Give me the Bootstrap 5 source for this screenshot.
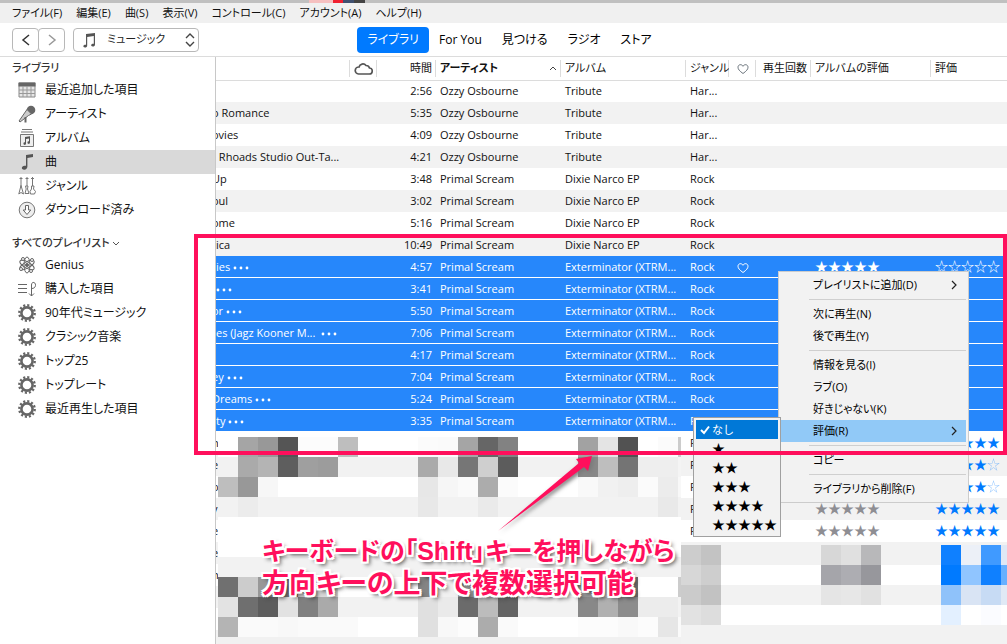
<!DOCTYPE html>
<html lang="ja">
<head>
<meta charset="utf-8">
<meta name="viewport" content="width=device-width, initial-scale=1">
<title>iTunes</title>
<link href="https://cdn.jsdelivr.net/npm/bootstrap@5.3.0/dist/css/bootstrap.min.css" rel="stylesheet">
<style>
:root{--ui:"Open Sans","Noto Sans CJK JP",sans-serif;--pink:#ff0f5c;--sel:#2687fb;--line:#dcdcdc}
body{font:11px/16px var(--ui);font-feature-settings:"palt";color:#111;height:100vh;background:#fff}
button,select{font-feature-settings:inherit!important}
a{color:inherit;text-decoration:none}
.strip{height:3px;background:linear-gradient(90deg,#c0c0c0 309px,#f5c0c0 309px 333px,#f02030 333px 343px,#405070 343px 354px,#444 354px 365px,#c0c0c0 365px)}
.menubar{height:20px;background:#f0f0f0;gap:14px;padding-left:12px}
.toolbar{height:34px;border-bottom:1px solid var(--line);padding-left:12px}
.half{flex:1 1 0}
.navbtn{width:27px;height:24px;border:1px solid #b8b8b8;background:#fff;border-radius:4px;padding:0;color:#333}
.navbtn+.navbtn{margin-left:-1px;color:#999}
.source{width:126px;height:24px}
.source select{appearance:none;width:100%;height:24px;border:1px solid #b8b8b8;border-radius:4px;background:#fff;padding:0 0 2px 33px;font-size:11px;color:#222}
.source svg{position:absolute;pointer-events:none}
.tab{height:26px;padding:0 10px;font-size:12px;line-height:24px;border:0;border-radius:4px;background:none}
.tab.on{background:#007aff;color:#fff}
.sidebar{width:216px;border-right:1px solid #c8c8c8}
.sidebar h2{font-size:11px;line-height:21px;margin:0;padding-left:12px;color:#333;font-weight:500}
.sidebar h2.second{padding-top:10px}
.entry{height:24px;padding-left:18px;gap:9px;font-size:12px}
.entry.on{background:#d9d9d9}
.entry svg{width:18px;height:18px;flex:none}
.tracks{table-layout:fixed;border-collapse:collapse;width:100%}
.tracks th{height:23px;padding:0 4px;font-weight:400;font-size:11px;border-bottom:1px solid var(--line);background:linear-gradient(#dcdcdc,#dcdcdc) right 3px/1px 17px no-repeat;white-space:nowrap;overflow:hidden}
.tracks th:last-child{background:none}
.tracks td{height:22px;padding:0 4px;white-space:nowrap;overflow:hidden}
.tracks td:first-child{padding-left:0}
.tracks tbody tr:nth-child(even){background:#f2f2f2}
.tracks tbody tr.picked{background:linear-gradient(var(--sel) 21px,#fff 21px);color:#fff}
.cut{margin-left:-4px}
.stars{font:13px/16px "Noto Sans CJK JP",sans-serif}
.tracks .stars{color:#007aff;padding-bottom:2px}.tracks .stars.auto{color:#8e8e93}.tracks .picked .stars{color:#fff}
.faint{opacity:.4}
.mosaic,.frame,.pointer,.note,.popup{position:absolute}
.mosaic{left:0;top:0}
.frame{left:194px;right:0;top:177px;height:221px;border:4px solid var(--pink);pointer-events:none}
.popup{background:#f2f2f2;border:1px solid #ccc;margin:0;color:#000}
.ctx{left:778px;top:214px;width:191px;padding:2px}
.ctx button,.rate button{display:flex;align-items:center;width:100%;border:0;background:none;padding:0;text-align:left}
.ctx button{height:22px;padding:0 8px 0 32px;font-size:11px}
.ctx button.on{background:#91c9f7}
.ctx hr{margin:3px 0 3px 28px;border:0;border-top:1px solid #cfcfcf;opacity:1}
.rate{left:693px;top:360px;width:88px;padding:2px;border-color:#a0a0a0}
.rate button{height:19px;padding:0 0 2px 16px;color:#000;font-feature-settings:normal!important}
.rate button.on{background:#0078d7;color:#fff;padding:0 0 0 4px;gap:2px}
.note{left:262px;top:478px;font:700 27px/33px "Liberation Sans","Noto Sans CJK JP",sans-serif;font-feature-settings:"palt";color:var(--pink);white-space:nowrap;margin:0;
text-shadow:2px 0 #fff,-2px 0 #fff,0 2px #fff,0 -2px #fff,2px 2px #fff,-2px -2px #fff,2px -2px #fff,-2px 2px #fff,3px 3px 4px #333}
.note .lead-line{font-size:25px}
.pointer{left:490px;top:390px;filter:drop-shadow(2px 2px 2px #777)}
</style>
</head>
<body class="d-flex flex-column overflow-hidden">
<svg class="d-none">
<symbol id="gear" viewBox="0 0 18 18"><circle cx="9" cy="9" r="5.6" fill="none" stroke="#666" stroke-width="2.6"/><circle cx="9" cy="9" r="7.7" fill="none" stroke="#666" stroke-width="2.4" stroke-dasharray="2.1 1.93"/></symbol>
<symbol id="heart" viewBox="0 0 12 12"><path d="M6 10.5C2.5 8 1 6.300 1 4.200C1 1.300 4.800.8 6 3.300C7.200.8 11 1.300 11 4.200C11 6.300 9.500 8 6 10.500Z" fill="none" stroke="currentColor"/></symbol>
<symbol id="note" viewBox="0 0 18 18"><path d="M8 2l7-1v3l-5.600 1v8.500c0 2-1.400 3-3 3.200c-3.600.2-3.200-3.700.2-3.900h1.400z" fill="#555"/></symbol>
<symbol id="more" viewBox="0 0 17 4"><circle cx="2" cy="2" r="1.400"/><circle cx="8" cy="2" r="1.400"/><circle cx="14" cy="2" r="1.400"/></symbol>
</svg>
<div class="strip flex-shrink-0"></div>
<nav class="menubar d-flex align-items-center flex-shrink-0">
<a href="#">ファイル(F)</a><a href="#">編集(E)</a><a href="#">曲(S)</a><a href="#">表示(V)</a><a href="#">コントロール(C)</a><a href="#">アカウント(A)</a><a href="#">ヘルプ(H)</a>
</nav>
<header class="toolbar d-flex align-items-center flex-shrink-0">
<div class="half d-flex align-items-center">
<button class="navbtn" aria-label="戻る"><svg width="10" height="14" viewBox="0 0 10 14" class="d-block mx-auto"><path d="M8 2L2 7l6 5" fill="none" stroke="currentColor" stroke-width="1.500"/></svg></button><button class="navbtn" aria-label="進む"><svg width="10" height="14" viewBox="0 0 10 14" class="d-block mx-auto"><path d="M2 2l6 5-6 5" fill="none" stroke="currentColor" stroke-width="1.500"/></svg></button>
<div class="source position-relative ms-2 d-flex align-items-center">
<select aria-label="メディア"><option>ミュージック</option></select>
<svg width="16" height="16" viewBox="0 0 16 16" class="start-0 ms-2"><path d="M5 2l9-1v11.500c0 1.500-1 2-2.200 2c-2.400 0-2-2.700.3-2.700h.7V4L6.200 5v8.500c0 1.500-1 2-2.200 2c-2.400 0-2-2.700.3-2.700H5z" fill="#555"/></svg>
<svg width="10" height="16" viewBox="0 0 10 16" class="end-0 me-1"><path d="M1 6l4-4 4 4M1 10l4 4 4-4" fill="none" stroke="#444" stroke-width="1.400"/></svg>
</div>
</div>
<div class="d-flex flex-shrink-0"><button class="tab on">ライブラリ</button><button class="tab">For You</button><button class="tab">見つける</button><button class="tab">ラジオ</button><button class="tab">ストア</button></div>
<div class="half"></div>
</header>
<main class="d-flex flex-fill position-relative overflow-hidden">
<aside class="sidebar flex-shrink-0">
<h2>ライブラリ</h2>
<a href="#" class="entry d-flex align-items-center"><svg viewBox="0 0 18 18"><path d="M1 2h16v14H1z" fill="#e6e6e6" stroke="#888"/><path d="M.5 1.500h17v4H.5z" fill="#666"/><path d="M5 5v11M9 5v11M13 5v11M1 9h16M1 12.500h16" stroke="#999"/></svg>最近追加した項目</a>
<a href="#" class="entry d-flex align-items-center"><svg viewBox="0 0 18 18"><circle cx="13" cy="5" r="4.300" fill="#666"/><path d="M9 4.500l4.500 4.500-3 1.500L2 17l-1-1z" fill="#ccc" stroke="#666"/><path d="M7.500 12v5.500" stroke="#666" stroke-width="2"/></svg>アーティスト</a>
<a href="#" class="entry d-flex align-items-center"><svg viewBox="0 0 18 18"><path d="M4 .5h10M3 3h12" stroke="#777"/><path d="M2.500 5.500h13v12h-13z" fill="#eee" stroke="#777"/><path d="M7 8l5-.7v6a1.300 1.300 0 1 1-1-1V9.500l-3 .4v4.400a1.300 1.300 0 1 1-1-1z" fill="#555"/></svg>アルバム</a>
<a href="#" class="entry on d-flex align-items-center"><svg><use href="#note"/></svg>曲</a>
<a href="#" class="entry d-flex align-items-center"><svg viewBox="0 0 18 18" fill="none" stroke="#777"><path d="M3 0v10M9 0v9M14.500 0v9M1.500 1.500h3M7.500 1.500h3M13 1.500h3M3 8.500L.8 17 3 15.500 5.500 17z"/><path d="M7.500 9h2.500l-.5 3 1.500 4.500H7l1.200-4.500zM13.500 9H16l-.5 3 2 2.500-1 2.500h-4l-.5-2.500 1.500-2.500z"/></svg>ジャンル</a>
<a href="#" class="entry d-flex align-items-center"><svg viewBox="0 0 18 18"><circle cx="9" cy="9" r="7.800" fill="#eee" stroke="#777"/><path d="M7.500 4.500h3v4.500h2.300L9 13.500 5.200 9h2.300z" fill="#fff" stroke="#666"/></svg>ダウンロード済み</a>
<h2 class="second">すべてのプレイリスト <svg width="8" height="6" viewBox="0 0 8 6"><path d="M1 1l3 3 3-3" fill="none" stroke="#555"/></svg></h2>
<a href="#" class="entry d-flex align-items-center"><svg viewBox="0 0 18 18" fill="none" stroke="#666"><ellipse cx="9" cy="9" rx="3" ry="8"/><ellipse cx="9" cy="9" rx="3" ry="8" transform="rotate(60 9 9)"/><ellipse cx="9" cy="9" rx="3" ry="8" transform="rotate(120 9 9)"/><circle cx="9" cy="9" r="1.500" fill="#666"/><g fill="#fff"><circle cx="5" cy="3" r="1.500"/><circle cx="14" cy="4" r="1.500"/><circle cx="3" cy="13" r="1.500"/><circle cx="13" cy="15" r="1.500"/></g></svg>Genius</a>
<a href="#" class="entry d-flex align-items-center"><svg viewBox="0 0 18 18" fill="none" stroke="#666"><path d="M0 4.500h9M0 8.500h9M0 12.500h9M13.500 16V5c0-4 4.500-3 4 .5-.3 2-1.500 3-4 3M11 13.500l2.500 2.500 2.500-2.500"/></svg>購入した項目</a>
<a href="#" class="entry d-flex align-items-center"><svg><use href="#gear"/></svg>90年代ミュージック</a>
<a href="#" class="entry d-flex align-items-center"><svg><use href="#gear"/></svg>クラシック音楽</a>
<a href="#" class="entry d-flex align-items-center"><svg><use href="#gear"/></svg>トップ25</a>
<a href="#" class="entry d-flex align-items-center"><svg><use href="#gear"/></svg>トップレート</a>
<a href="#" class="entry d-flex align-items-center"><svg><use href="#gear"/></svg>最近再生した項目</a>
</aside>
<section class="flex-fill">
<table class="tracks">
<colgroup><col style="width:134px"><col style="width:27px"><col style="width:59px"><col style="width:125px"><col style="width:125px"><col style="width:43px"><col style="width:27px"><col style="width:55px"><col style="width:120px"><col></colgroup>
<thead><tr><th></th><th><svg class="d-block" width="19" height="13" viewBox="0 0 19 13" aria-label="iCloud"><path d="M4.500 12h10.500a3 3 0 0 0 .5-6A3.500 3.500 0 0 0 12 3.500A4 4 0 0 0 5 5A3.500 3.500 0 0 0 4.500 12z" fill="none" stroke="#555" stroke-width="1.700"/></svg></th><th class="text-end">時間</th><th><div class="d-flex justify-content-between align-items-center fw-bold">アーティスト<svg width="8" height="6" viewBox="0 0 8 6"><path d="M1 5l3-3 3 3" fill="none" stroke="#444"/></svg></div></th><th>アルバム</th><th>ジャンル</th><th class="text-secondary text-center"><svg width="12" height="12"><use href="#heart"/></svg></th><th class="text-end">再生回数</th><th>アルバムの評価</th><th>評価</th></tr></thead>
<tbody>
<tr><td></td><td></td><td class="text-end">2:56</td><td>Ozzy Osbourne</td><td>Tribute</td><td>Har...</td><td></td><td></td><td></td><td></td></tr>
<tr><td><div class="cut">o Romance</div></td><td></td><td class="text-end">5:35</td><td>Ozzy Osbourne</td><td>Tribute</td><td>Har...</td><td></td><td></td><td></td><td></td></tr>
<tr><td><div class="cut">ovies</div></td><td></td><td class="text-end">4:09</td><td>Ozzy Osbourne</td><td>Tribute</td><td>Har...</td><td></td><td></td><td></td><td></td></tr>
<tr><td>&nbsp;Rhoads Studio Out-Ta...</td><td></td><td class="text-end">4:21</td><td>Ozzy Osbourne</td><td>Tribute</td><td>Har...</td><td></td><td></td><td></td><td></td></tr>
<tr><td><div class="cut">Up</div></td><td></td><td class="text-end">3:48</td><td>Primal Scream</td><td>Dixie Narco EP</td><td>Rock</td><td></td><td></td><td></td><td></td></tr>
<tr><td><div class="cut">oul</div></td><td></td><td class="text-end">3:02</td><td>Primal Scream</td><td>Dixie Narco EP</td><td>Rock</td><td></td><td></td><td></td><td></td></tr>
<tr><td><div class="cut">ome</div></td><td></td><td class="text-end">5:16</td><td>Primal Scream</td><td>Dixie Narco EP</td><td>Rock</td><td></td><td></td><td></td><td></td></tr>
<tr><td>ica</td><td></td><td class="text-end">10:49</td><td>Primal Scream</td><td>Dixie Narco EP</td><td>Rock</td><td></td><td></td><td></td><td></td></tr>
<tr class="picked"><td>ies <svg width="17" height="4" fill="#fff" class="align-middle"><use href="#more"/></svg></td><td></td><td class="text-end">4:57</td><td>Primal Scream</td><td>Exterminator (XTRM...</td><td>Rock</td><td class="text-center"><svg width="12" height="12"><use href="#heart"/></svg></td><td></td><td class="stars">★★★★★</td><td class="stars">☆☆☆☆☆</td></tr>
<tr class="picked"><td><svg width="17" height="4" fill="#fff" class="align-middle"><use href="#more"/></svg></td><td></td><td class="text-end">3:41</td><td>Primal Scream</td><td>Exterminator (XTRM...</td><td>Rock</td><td></td><td></td><td></td><td></td></tr>
<tr class="picked"><td><div class="cut">or <svg width="17" height="4" fill="#fff" class="align-middle"><use href="#more"/></svg></div></td><td></td><td class="text-end">5:50</td><td>Primal Scream</td><td>Exterminator (XTRM...</td><td>Rock</td><td></td><td></td><td></td><td></td></tr>
<tr class="picked"><td>es (Jagz Kooner M... &nbsp;<svg width="17" height="4" fill="#fff" class="align-middle"><use href="#more"/></svg></td><td></td><td class="text-end">7:06</td><td>Primal Scream</td><td>Exterminator (XTRM...</td><td>Rock</td><td></td><td></td><td></td><td></td></tr>
<tr class="picked"><td></td><td></td><td class="text-end">4:17</td><td>Primal Scream</td><td>Exterminator (XTRM...</td><td>Rock</td><td></td><td></td><td></td><td></td></tr>
<tr class="picked"><td><div class="cut">ey <svg width="17" height="4" fill="#fff" class="align-middle"><use href="#more"/></svg></div></td><td></td><td class="text-end">7:04</td><td>Primal Scream</td><td>Exterminator (XTRM...</td><td>Rock</td><td></td><td></td><td></td><td></td></tr>
<tr class="picked"><td><div class="cut">Dreams <svg width="17" height="4" fill="#fff" class="align-middle"><use href="#more"/></svg></div></td><td></td><td class="text-end">5:24</td><td>Primal Scream</td><td>Exterminator (XTRM...</td><td>Rock</td><td></td><td></td><td></td><td></td></tr>
<tr class="picked"><td>ty <svg width="17" height="4" fill="#fff" class="align-middle"><use href="#more"/></svg></td><td></td><td class="text-end">3:35</td><td>Primal Scream</td><td>Exterminator (XTRM...</td><td>Rock</td><td></td><td></td><td></td><td></td></tr>
<tr><td><div class="cut">n</div></td><td></td><td></td><td></td><td></td><td>Rock</td><td></td><td></td><td></td><td class="stars">★★★★★</td></tr>
<tr><td><div class="cut">e</div></td><td></td><td></td><td></td><td></td><td>Rock</td><td></td><td></td><td></td><td class="stars">★★★★<span class="faint">☆</span></td></tr>
<tr><td><div class="cut">o</div></td><td></td><td></td><td></td><td></td><td>Rock</td><td></td><td></td><td></td><td class="stars">★★★★<span class="faint">☆</span></td></tr>
<tr><td><div class="cut">y</div></td><td></td><td></td><td></td><td></td><td>Rock</td><td></td><td></td><td class="stars auto">★★★★★</td><td class="stars">★★★★★</td></tr>
<tr><td><div class="cut">e</div></td><td></td><td></td><td></td><td></td><td>Rock</td><td></td><td></td><td class="stars auto">★★★★★</td><td class="stars">★★★★★</td></tr>
<tr><td colspan="10"><div class="cut">e</div></td></tr><tr><td colspan="10"><div class="cut">n</div></td></tr><tr><td colspan="10"></td></tr><tr><td colspan="10"></td></tr><tr><td colspan="10"></td></tr>
</tbody></table>
</section>
<svg class="mosaic w-100 h-100" id="mosaic" shape-rendering="crispEdges"></svg>
<div class="popup ctx">
<button>プレイリストに追加(D)<svg class="ms-auto" width="8" height="10" viewBox="0 0 8 10"><path d="M2 1l4 4-4 4" fill="none" stroke="#222" stroke-width="1.200"/></svg></button><hr>
<button>次に再生(N)</button><button>後で再生(Y)</button><hr>
<button>情報を見る(I)</button><button>ラブ(O)</button><button>好きじゃない(K)</button>
<button class="on">評価(R)<svg class="ms-auto" width="8" height="10" viewBox="0 0 8 10"><path d="M2 1l4 4-4 4" fill="none" stroke="#222" stroke-width="1.200"/></svg></button><hr>
<button>コピー</button><hr><button>ライブラリから削除(F)</button>
</div>
<div class="popup rate">
<button class="on"><svg width="10" height="10" viewBox="0 0 10 10"><path d="M1 5l3 3 5-6.500" fill="none" stroke="#fff" stroke-width="2"/></svg>なし</button>
<button class="stars">★</button><button class="stars">★★</button><button class="stars">★★★</button><button class="stars">★★★★</button><button class="stars">★★★★★</button>
</div>
<div class="frame"></div>
<p class="note"><span class="lead-line">キーボードの「Shift」キーを押しながら</span><br>方向キーの上下で複数選択可能</p>
<svg class="pointer" width="110" height="90" viewBox="0 0 110 90"><path d="M8 84L89 16 86 12 102 9 98 24 94 20z" fill="#ff0f5c"/></svg>
</main>
<script src="https://cdn.jsdelivr.net/npm/bootstrap@5.3.0/dist/js/bootstrap.bundle.min.js"></script>
<script>
// Blocked-out song details: each line is one 20px band, two hex digits of grey per cell, ".." keeps the band colour.
const svg = document.getElementById('mosaic');
function block(x, y, w, h, fill) {
  const r = document.createElementNS('http://www.w3.org/2000/svg', 'rect');
  for (const [k, v] of Object.entries({x, y, width: w, height: h, fill})) r.setAttribute(k, v);
  svg.appendChild(r);
}
const left = [
 ['ff','.. a5 98 55 fc fc be .. .. .. fb fa a5 66 82 .. .. .. a2 e4 52 .. fb cc'],
 ['f2','.. aa b4 5e 9f 9c .. .. .. .. aa e8 76 cf 5c .. .. .. 88 be 74 ee ee f4'],
 ['ff','be 98 f7 .. .. .. .. .. .. .. e7 f6 fa ac fb .. .. .. f9 f1 ee fb ec f8'],
 ['f2','.. ec .. .. .. .. .. .. .. .. e8 .. .. ea .. .. .. .. .. .. .. .. e9'],
 ['ff',''],['ff',''],['f2',''],
 ['ff','70 cc 98 70 c8 d8 .. .. .. .. 84 f0 90 70 98 .. .. .. 98 c8 6c .. .. cc'],
 ['f2','e3 6f 5d e2 80 aa .. .. .. .. e0 ea 6b bc 64 .. .. .. 88 b0 8c ec ec'],
 ['ff','b4 fa fa f8 fa fa fa .. .. .. e0 f8 fc ac fa .. .. .. fc fc f9 fc e6 fa'],
 ['f1','']];
left.forEach(([bg, cells], i) => {
  const y = 380 + i * 20;
  block(218, y, 463, 20, '#' + bg.repeat(3));
  cells.split(' ').forEach((c, n) => { if (c && c !== '..') block(218 + n * 20, y, n === 23 ? 3 : 20, 20, '#' + c.repeat(3)); });
});
const right = [
 ['#f2f2f2','#cdcdcd #c3c3c3','#d7d7d7 #e0e0e0 #b8b8ba','#0f80ff #ecf0f7 #409aff #dfe8f5'],
 ['#fff','#d7d7d7 #cecece','#a5a5aa #adadb2 #97979c','#007aff #90c5ff #0f80ff #66b0ff'],
 ['#f2f2f2','#cbcbcb #c2c2c2','#e5e5e5 #e7e7e7 #e1e1e1','#8fc2fa #d9e4f4 #c7dbf4 #e0e9f5'],
 ['#fff','#e2e2e2 #dddddd','#fff #fff #fff','#e3f0ff #fff #fbfcff #fff'],
 ['#f2f2f2','','','']];
right.forEach(([bg, ...groups], i) => {
  const y = 488 + i * 20;
  block(681, y, '100%', 20, bg);
  groups.forEach((g, k) => g.split(' ').forEach((c, n) => { if (c) block([681, 821, 941][k] + n * 20, y, 20, 20, c); }));
});
</script>
</body>
</html>
